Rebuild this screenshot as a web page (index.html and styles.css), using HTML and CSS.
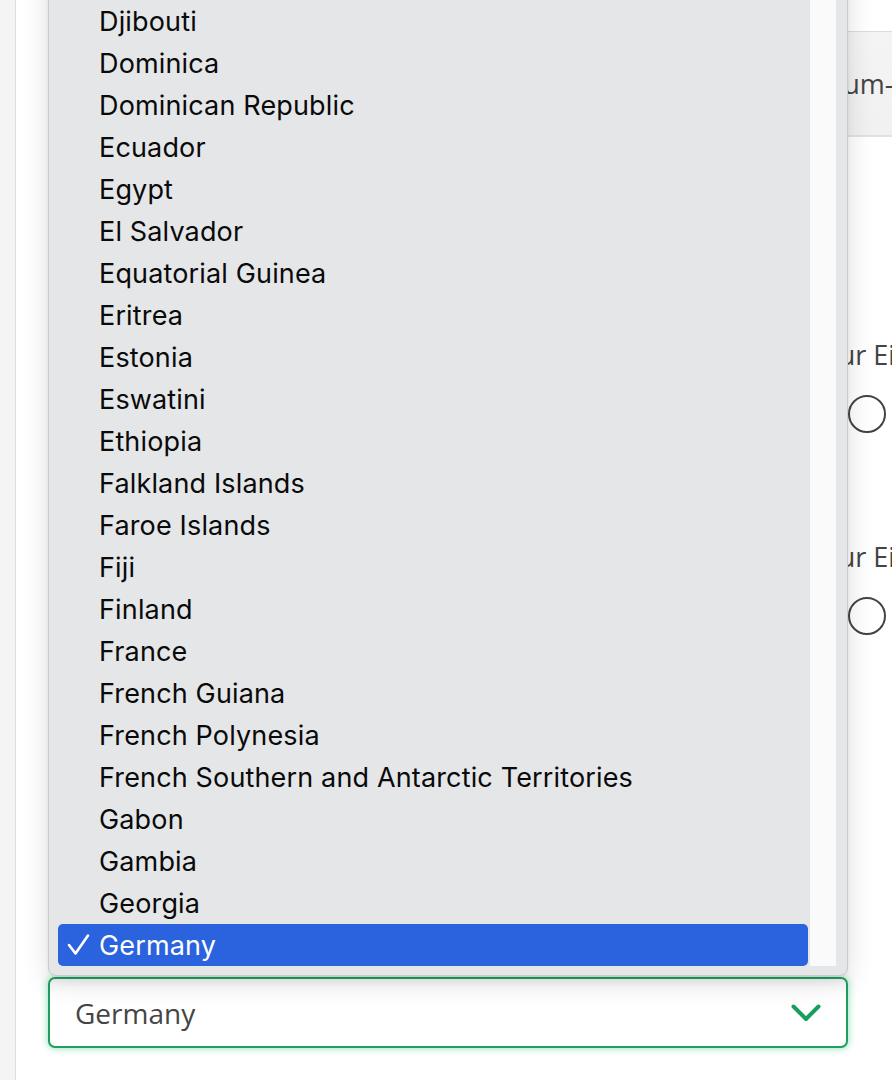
FILE: index.html
```html
<!DOCTYPE html>
<html lang="en">
<head>
<meta charset="utf-8">
<title>Country select</title>
<link rel="stylesheet" href="styles.css">
</head>
<body>
<div class="app">
  <aside class="sidebar"></aside>
  <main class="content">
    <form class="form">
      <div class="date-bar"><span class="date-text">Datum-Eingabe</span></div>
      <div class="question">
        <p class="q-label">zur Einwilligung</p>
        <span class="radio"></span>
      </div>
      <div class="question second">
        <p class="q-label">zur Einwilligung</p>
        <span class="radio"></span>
      </div>
      <div class="field">
        <div class="popup">
          <ul class="list">
            <li class="opt">Denmark</li>
            <li class="opt">Djibouti</li>
            <li class="opt">Dominica</li>
            <li class="opt">Dominican Republic</li>
            <li class="opt">Ecuador</li>
            <li class="opt">Egypt</li>
            <li class="opt">El Salvador</li>
            <li class="opt">Equatorial Guinea</li>
            <li class="opt">Eritrea</li>
            <li class="opt">Estonia</li>
            <li class="opt">Eswatini</li>
            <li class="opt">Ethiopia</li>
            <li class="opt">Falkland Islands</li>
            <li class="opt">Faroe Islands</li>
            <li class="opt">Fiji</li>
            <li class="opt">Finland</li>
            <li class="opt">France</li>
            <li class="opt">French Guiana</li>
            <li class="opt">French Polynesia</li>
            <li class="opt">French Southern and Antarctic Territories</li>
            <li class="opt">Gabon</li>
            <li class="opt">Gambia</li>
            <li class="opt">Georgia</li>
            <li class="opt selected"><svg class="check" width="26" height="26" viewBox="0 0 26 26"><polyline points="3,13 9.5,21.5 22,3.5" fill="none" stroke="#fff" stroke-width="2.6" stroke-linecap="round" stroke-linejoin="round"/></svg>Germany</li>
          </ul>
          <div class="scrollbar"></div>
        </div>
        <div class="select">
          <span class="select-value">Germany</span>
          <svg class="chevron" width="30" height="18" viewBox="0 0 30 18"><polyline points="2.5,2.5 15,15 27.5,2.5" fill="none" stroke="#17a05d" stroke-width="4" stroke-linecap="round" stroke-linejoin="round"/></svg>
        </div>
      </div>
    </form>
  </main>
</div>
</body>
</html>
```

FILE: styles.css
```css
* { box-sizing: border-box; }

html, body {
  margin: 0;
  padding: 0;
  height: 1080px;
  overflow: hidden;
  background: #ffffff;
}

.app {
  display: flex;
  height: 1080px;
}

.sidebar {
  width: 16px;
  flex: none;
  background: #f4f4f4;
  border-right: 1px solid #dedede;
}

.content {
  flex: 1;
  min-width: 0;
  padding-left: 32px;
}

.form {
  display: grid;
  grid-template-columns: 800px 600px;
  grid-template-rows: auto auto auto 1fr auto;
  height: 1080px;
  font-family: "Open Sans", "Liberation Sans", sans-serif;
  color: #444;
}

.date-bar {
  grid-column: 1 / -1;
  margin-top: 31px;
  height: 106px;
  background: linear-gradient(#f4f4f4, #f1f1f1);
  border-top: 1px solid #dcdcdc;
  border-bottom: 2px solid #e2e2e2;
  display: flex;
  align-items: center;
  padding-left: 751px;
  font-size: 27px;
}

.question {
  grid-column: 2;
  margin-top: 200px;
  display: flex;
  flex-direction: column;
  align-items: flex-start;
  gap: 22px;
}

.question.second {
  margin-top: 106px;
}

.q-label {
  margin: 0 0 0 -22px;
  font-size: 27px;
  line-height: 36px;
  white-space: nowrap;
}

.radio {
  width: 38px;
  height: 38px;
  border: 2px solid #444;
  border-radius: 50%;
  background: #fff;
}

.field {
  grid-column: 1;
  grid-row: 5;
  position: relative;
  margin-bottom: 32px;
}

.popup {
  position: absolute;
  left: 0;
  bottom: calc(100% + 1px);
  width: 800px;
  display: flex;
  background: #e5e6e8;
  border: 1px solid #cbcbcb;
  border-radius: 8px;
  padding: 0 11px 9px 9px;
  box-shadow: 0 6px 28px rgba(0, 0, 0, 0.13), 0 1px 4px rgba(0, 0, 0, 0.06);
  z-index: 5;
}

.list {
  list-style: none;
  margin: 0;
  padding: 0;
  width: 750px;
  flex: none;
}

.opt {
  height: 42px;
  display: flex;
  align-items: center;
  padding-left: 41px;
  font-family: Inter, "Liberation Sans", sans-serif;
  font-size: 27px;
  letter-spacing: 0.15px;
  color: #0a0a0a;
  white-space: nowrap;
  border-radius: 5px;
}

.opt.selected {
  position: relative;
  background: #2a63dd;
  color: #fff;
}

.check {
  position: absolute;
  left: 8px;
  top: 8px;
}

.scrollbar {
  width: 26px;
  margin-left: 2px;
  flex: none;
  background: #fafafa;
}

.select {
  position: relative;
  height: 71px;
  border: 2px solid #1f9e60;
  border-radius: 7px;
  background: #fff;
  display: flex;
  align-items: center;
  justify-content: space-between;
  padding: 0 25px 0 25px;
  font-size: 28px;
  color: #454545;
  box-shadow: 0 0 7px 1px rgba(40, 200, 120, 0.45), inset 0 10px 12px -8px rgba(0, 0, 0, 0.09);
}

.chevron {
  display: block;
}
```
